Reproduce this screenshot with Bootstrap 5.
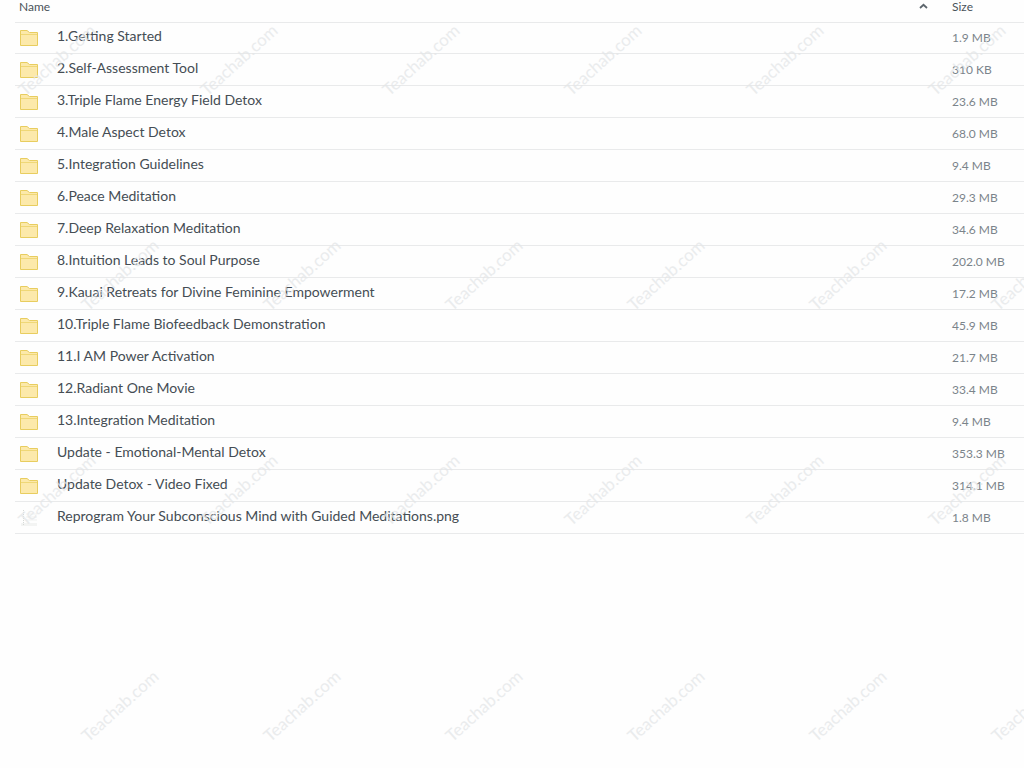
<!DOCTYPE html>
<html lang="en">
<head>
    <meta charset="UTF-8">
    <title>Files</title>
    <link href="https://cdn.jsdelivr.net/npm/bootstrap@5.3.0/dist/css/bootstrap.min.css" rel="stylesheet">
    <style>
        html, body {
            height: 100%;
        }

        body {
            font-family: Lato, "Liberation Sans", sans-serif;
            background: #fefefe;
            color: #454d54;
            overflow: hidden;
            position: relative;
        }

        .file-list {
            margin-left: 15px;
        }

        .file-head {
            height: 23px;
            margin-bottom: -1px;
            border-bottom: 1px solid #e9eaeb;
            font-size: 12px;
            color: #4a535a;
            padding-bottom: 8px;
        }

        .file-head .head-name {
            margin-left: 4px;
            width: 933px;
        }

        .file-head svg {
            margin-right: 24px;
            margin-bottom: 2px;
        }

        .file-row {
            height: 32px;
            border-bottom: 1px solid #e9eaeb;
            font-size: 14px;
            padding-bottom: 5px;
        }

        .file-icon {
            width: 42px;
            padding-left: 5px;
            padding-top: 5px;
            flex: none;
        }

        .file-name {
            width: 895px;
            flex: none;
        }

        .file-size {
            font-size: 12px;
            color: #7b848b;
            padding-top: 5px;
        }

        .stamp-layer {
            position: absolute;
            inset: 0;
            pointer-events: none;
        }

        .stamp {
            position: absolute;
            width: 110px;
            text-align: center;
            font-size: 17px;
            line-height: 24px;
            color: #e4e6e8;
            opacity: .75;
            transform: rotate(-42deg);
        }
    </style>
</head>

<body>
    <div class="file-list">
        <div class="file-head d-flex align-items-center">
            <div class="head-name d-flex justify-content-between align-items-center">
                <span>Name</span>
                <svg width="9" height="6" viewBox="0 0 9 6"><path d="M1 5l3.5-3.2L8 5" fill="none" stroke="#5c656c" stroke-width="1.8"/></svg>
            </div>
            <div class="head-size">Size</div>
        </div>
        <div id="rows"></div>
    </div>

    <div class="stamp-layer" id="stamps"></div>

    <!-- Bootstrap JS -->
    <script src="https://cdn.jsdelivr.net/npm/bootstrap@5.3.0/dist/js/bootstrap.bundle.min.js"></script>

    <script>
        const files = [
            ['1.Getting Started', '1.9 MB'],
            ['2.Self-Assessment Tool', '310 KB'],
            ['3.Triple Flame Energy Field Detox', '23.6 MB'],
            ['4.Male Aspect Detox', '68.0 MB'],
            ['5.Integration Guidelines', '9.4 MB'],
            ['6.Peace Meditation', '29.3 MB'],
            ['7.Deep Relaxation Meditation', '34.6 MB'],
            ['8.Intuition Leads to Soul Purpose', '202.0 MB'],
            ['9.Kauai Retreats for Divine Feminine Empowerment', '17.2 MB'],
            ['10.Triple Flame Biofeedback Demonstration', '45.9 MB'],
            ['11.I AM Power Activation', '21.7 MB'],
            ['12.Radiant One Movie', '33.4 MB'],
            ['13.Integration Meditation', '9.4 MB'],
            ['Update - Emotional-Mental Detox', '353.3 MB'],
            ['Update Detox - Video Fixed', '314.1 MB'],
            ['Reprogram Your Subconscious Mind with Guided Meditations.png', '1.8 MB']
        ];

        const folderIcon = '<svg width="18" height="16" viewBox="0 0 18 16"><path d="M.5 15.5V.5h6.5l2.5 2h8v13z" fill="#fce9ab" stroke="#e8cd5f"/><path d="M1 4.5h16" stroke="#efd777"/></svg>';
        const imageIcon = '<svg width="18" height="18" viewBox="0 0 18 18"><path d="M1 14h16v3H1z" fill="#f3f4f3"/><path d="M3.5 1v15" stroke="#d5d9d6" stroke-dasharray="1 1"/><path d="M6 5h11M6 8h11M6 11h11" stroke="#f0f1f0"/></svg>';

        document.getElementById('rows').innerHTML = files.map(f => `
            <div class="file-row d-flex align-items-center">
                <div class="file-icon d-flex">${f[0].endsWith('.png') ? imageIcon : folderIcon}</div>
                <div class="file-name">${f[0]}</div>
                <div class="file-size">${f[1]}</div>
            </div>`).join('');

        // watermark grid, every other row shifted left
        let stamps = '';
        [60, 275, 490, 706].forEach((y, r) => {
            const start = r % 2 ? 120 : 57;
            for (let x = start; x < 1100; x += 182) {
                stamps += `<span class="stamp" style="left:${x - 55}px;top:${y - 12}px">Teachab.com</span>`;
            }
        });
        document.getElementById('stamps').innerHTML = stamps;
    </script>
</body>

</html>
